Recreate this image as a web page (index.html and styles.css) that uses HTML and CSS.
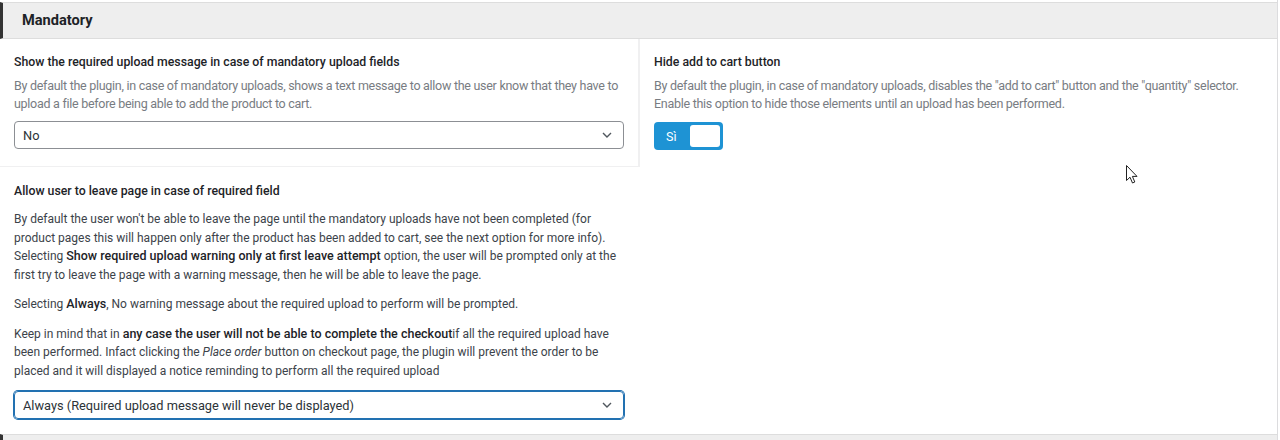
FILE: index.html
```html
<!DOCTYPE html>
<html>
<head>
<meta charset="utf-8">
<link rel="stylesheet" href="styles.css">
</head>
<body>
<div class="panel">
  <div class="section-header">Mandatory</div>
  <div class="grid">
    <div class="cell cell-boxed">
      <div class="label">Show the required upload message in case of mandatory upload fields</div>
      <div class="desc">By default the plugin, in case of mandatory uploads, shows a text message to allow the user know that they have to upload a file before being able to add the product to cart.</div>
      <div class="select"><span>No</span><svg class="chev" width="10" height="6" viewBox="0 0 10 6"><path d="M1 1l4 4 4-4" fill="none" stroke="#50575e" stroke-width="1.4"/></svg></div>
    </div>
    <div class="cell">
      <div class="label">Hide add to cart button</div>
      <div class="desc">By default the plugin, in case of mandatory uploads, disables the "add to cart" button and the "quantity" selector. Enable this option to hide those elements until an upload has been performed.</div>
      <div class="toggle"><span class="toggle-text">Sì</span><span class="knob"></span></div>
    </div>
    <div class="cell cell-wide">
      <div class="label">Allow user to leave page in case of required field</div>
      <p class="para">By default the user won't be able to leave the page until the mandatory uploads have not been completed (for product pages this will happen only after the product has been added to cart, see the next option for more info). Selecting <b>Show required upload warning only at first leave attempt</b> option, the user will be prompted only at the first try to leave the page with a warning message, then he will be able to leave the page.</p>
      <p class="para">Selecting <b>Always</b>, No warning message about the required upload to perform will be prompted.</p>
      <p class="para">Keep in mind that in <b>any case the user will not be able to complete the checkout</b>if all the required upload have been performed. Infact clicking the <i>Place order</i> button on checkout page, the plugin will prevent the order to be placed and it will displayed a notice reminding to perform all the required upload</p>
      <div class="select select-focus"><span>Always (Required upload message will never be displayed)</span><svg class="chev" width="10" height="6" viewBox="0 0 10 6"><path d="M1 1l4 4 4-4" fill="none" stroke="#50575e" stroke-width="1.4"/></svg></div>
    </div>
  </div>
  <div class="section-header next"></div>
</div>
<svg class="cursor" width="13" height="20" viewBox="0 0 13 20"><path d="M0.5 0.5 L0.5 15.5 L4 12.2 L6.5 18 L8.8 17 L6.4 11.4 L11 11.4 Z" fill="#fff" stroke="#222" stroke-width="1" stroke-linejoin="miter"/></svg>
</body>
</html>
```
FILE: styles.css
```css
html, body {
  margin: 0;
  padding: 0;
  background: #fff;
}
body {
  font-family: Roboto, "Noto Sans", sans-serif;
  font-size: 12.5px;
  color: #3c434a;
  position: relative;
  height: 440px;
  overflow: hidden;
}
.panel {
  width: 1277px;
  border-right: 1px solid #dcdcde;
  padding-top: 2px;
  height: 438px;
  overflow: hidden;
}
.section-header {
  background: #eeeeee;
  border-top: 1px solid #dddddd;
  border-bottom: 1px solid #dddddd;
  border-left: 3px solid #333;
  height: 35px;
  line-height: 35px;
  padding-left: 19px;
  font-weight: 700;
  font-size: 14.6px;
  color: #1d2327;
}
.section-header.next {
  margin-top: 15px;
}
.grid {
  display: grid;
  grid-template-columns: 640px 1fr;
}
.cell {
  padding: 14px 14px 0 14px;
}
.cell-boxed {
  border-right: 2px solid #f0f0f1;
  border-bottom: 1px solid #f0f0f1;
  padding: 14px 14px 17px 14px;
  width: 610px;
}
.cell-wide {
  grid-column: 1;
  padding: 15px 14px 0 14px;
  width: 610px;
}
.label {
  font-weight: 500;
  font-size: 12.3px;
  line-height: 18px;
  color: #1d2327;
}
.desc {
  margin-top: 6px;
  font-size: 12.5px;
  letter-spacing: -0.28px;
  line-height: 18px;
  color: #787c82;
}
.select {
  margin-top: 8px;
  height: 26px;
  border: 1px solid #8c8f94;
  border-radius: 4px;
  display: flex;
  align-items: center;
  justify-content: space-between;
  padding: 0 11px 0 8px;
  color: #2c3338;
  font-size: 12.8px;
}
.select-focus {
  border-color: #2271b1;
  box-shadow: 0 0 0 1px #2271b1;
  margin-top: 9px;
}
.chev {
  display: block;
}
.toggle {
  margin-top: 9px;
  width: 69px;
  height: 28px;
  box-sizing: border-box;
  background: #1e93d4;
  border-radius: 4px;
  display: flex;
  align-items: center;
  justify-content: space-between;
  padding: 0 3px 0 12px;
}
.toggle-text {
  color: #fff;
  font-size: 12.5px;
}
.knob {
  width: 30px;
  height: 22px;
  background: #fff;
  border-radius: 3px;
}
.cell-wide .label {
  margin-bottom: 10px;
}
.para {
  margin: 0 0 10.5px 0;
  font-size: 12px;
  line-height: 18.7px;
  color: #3c434a;
}
.para b {
  font-weight: 500;
  font-size: 12.5px;
  color: #1d2327;
}
.cursor {
  position: absolute;
  left: 1126px;
  top: 165px;
}
```
